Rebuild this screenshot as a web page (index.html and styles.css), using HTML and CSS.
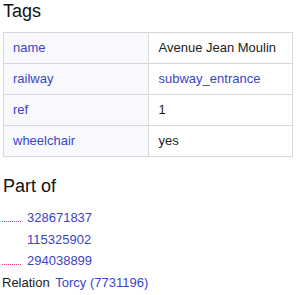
FILE: index.html
```html
<!DOCTYPE html>
<html>
<head>
<meta charset="utf-8">
<link rel="stylesheet" href="styles.css">
</head>
<body>
<div class="page">
  <h2 class="heading">Tags</h2>
  <table class="tags">
    <tr><td class="key"><a href="#">name</a></td><td class="val">Avenue Jean Moulin</td></tr>
    <tr><td class="key"><a href="#">railway</a></td><td class="val"><a href="#">subway_entrance</a></td></tr>
    <tr><td class="key"><a href="#">ref</a></td><td class="val">1</td></tr>
    <tr><td class="key"><a href="#">wheelchair</a></td><td class="val">yes</td></tr>
  </table>
  <h2 class="heading partof">Part of</h2>
  <ul class="parts">
    <li class="item"><span class="dots"></span><a href="#">328671837</a></li>
    <li class="item"><span class="nodots"></span><a href="#">115325902</a></li>
    <li class="item"><span class="dots"></span><a href="#">294038899</a></li>
    <li class="item rel">Relation <a href="#">Torcy (7731196)</a></li>
  </ul>
</div>
</body>
</html>
```
FILE: styles.css
```css
html, body {
  margin: 0;
  padding: 0;
  background: #fff;
}
body {
  font-family: "Liberation Sans", Arial, sans-serif;
  font-size: 13px;
  color: #222;
}
a {
  color: #3a45c8;
  text-decoration: none;
}
.page {
  padding: 1px 0 0 3px;
}
.heading {
  margin: 0;
  font-size: 18px;
  font-weight: normal;
  line-height: 21px;
  color: #111;
}
.tags {
  margin-top: 10px;
  width: 290px;
  border-collapse: collapse;
  table-layout: fixed;
  border: 1px solid #cfcfd2;
}
.tags td {
  border: 1px solid #d6d8dc;
  padding: 7px 9px 7px 10px;
  line-height: 16px;
  white-space: nowrap;
}
.tags td.key {
  background: #f7f9fc;
  padding-left: 9px;
}
.partof {
  margin-top: 19px;
}
.parts {
  list-style: none;
  margin: 10px 0 0 -1px;
  padding: 0;
}
.item {
  display: flex;
  align-items: baseline;
  line-height: 21.5px;
}
.dots, .nodots {
  display: inline-block;
  width: 20px;
  height: 1px;
  margin-right: 5px;
}
.dots {
  background: repeating-linear-gradient(to right, #e4457a 0 1px, transparent 1px 2px);
}
.rel {
  display: block;
}
.rel a {
  margin-left: 2px;
}
```
